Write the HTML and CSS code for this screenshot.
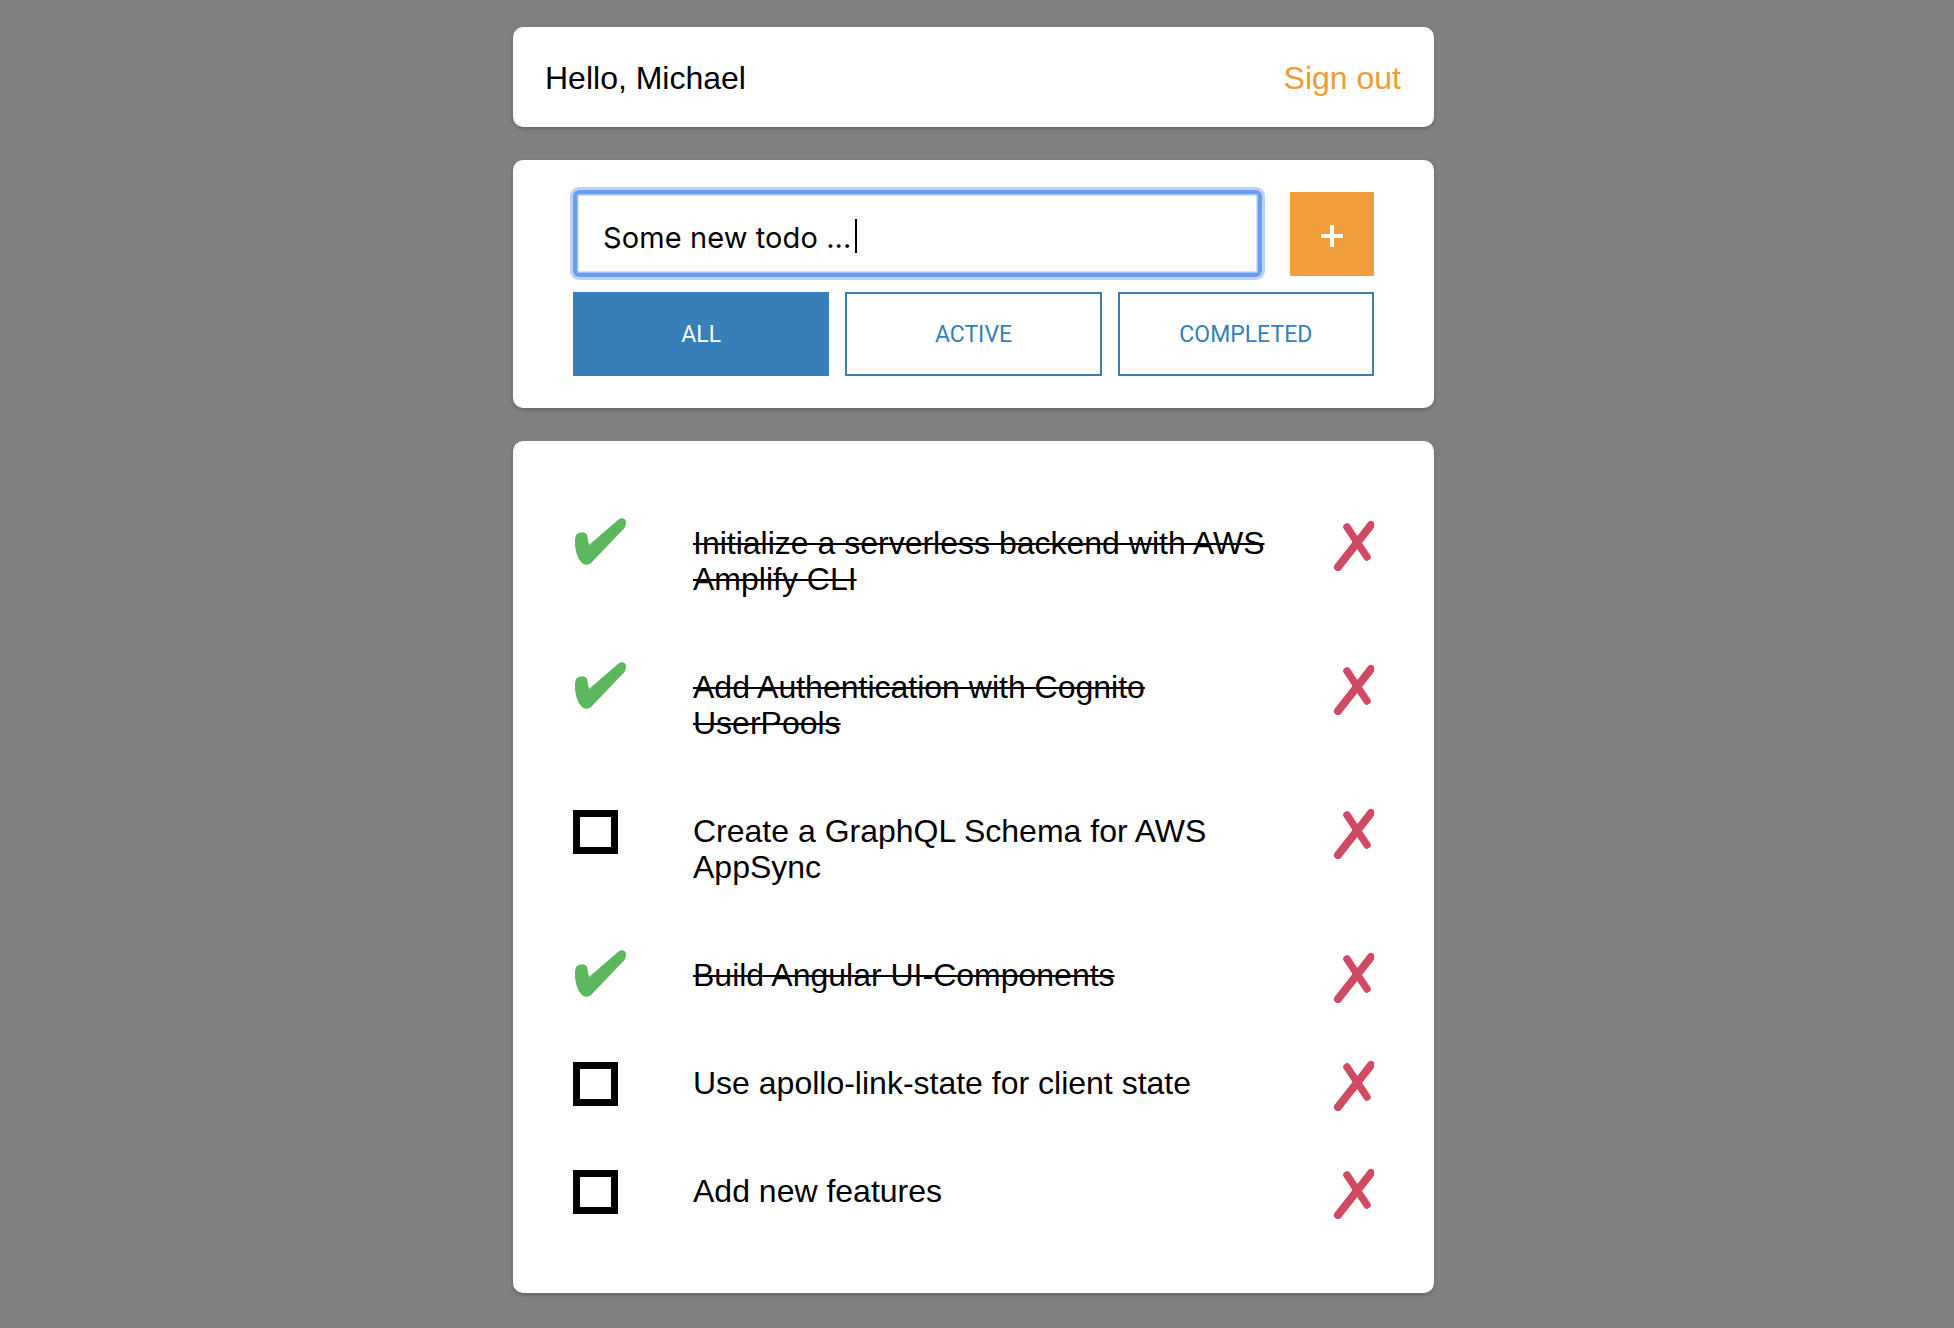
FILE: index.html
```html
<!DOCTYPE html>
<html lang="en">
<head>
<meta charset="utf-8">
<title>Todos</title>
<link rel="stylesheet" href="styles.css">
</head>
<body>
<main class="app">
  <header class="card header">
    <span class="greeting">Hello, Michael</span>
    <a class="signout" href="#">Sign out</a>
  </header>

  <section class="card composer">
    <div class="input-row">
      <div class="todo-input"><span class="todo-value">Some new todo ...</span><span class="caret"></span></div>
      <button class="add-btn" type="button" aria-label="Add">
        <svg class="plus" width="22" height="22" viewBox="0 0 22 22"><rect x="9" y="0" width="4" height="22" fill="#fff"/><rect x="0" y="9" width="22" height="4" fill="#fff"/></svg>
      </button>
    </div>
    <div class="filters">
      <button class="filter active" type="button">ALL</button>
      <button class="filter" type="button">ACTIVE</button>
      <button class="filter" type="button">COMPLETED</button>
    </div>
  </section>

  <section class="card list">
    <div class="item done">
      <svg class="check" width="54" height="52" viewBox="13 15 54 52"><path d="M17 33 C20 31 25 30 27 34 L29 44 L58 19 C61 16 66 17 66 21 C66 23 65.5 25 64.5 27 L32 61 C29 64.5 24 64.5 21 61 C17 56 15 49 15 41 C15 37 15.5 34 17 33 Z" fill="#5cb85c"/></svg>
      <span class="text">Initialize a serverless backend with AWS Amplify CLI</span>
      <svg class="remove" width="44" height="51" viewBox="0 0 44 51"><path d="M41 5 L8 47" stroke="#d04a63" stroke-width="8" stroke-linecap="round"/><path d="M17 7 L37 37" stroke="#d04a63" stroke-width="7.5" stroke-linecap="round"/></svg>
    </div>
    <div class="item done">
      <svg class="check" width="54" height="52" viewBox="13 15 54 52"><path d="M17 33 C20 31 25 30 27 34 L29 44 L58 19 C61 16 66 17 66 21 C66 23 65.5 25 64.5 27 L32 61 C29 64.5 24 64.5 21 61 C17 56 15 49 15 41 C15 37 15.5 34 17 33 Z" fill="#5cb85c"/></svg>
      <span class="text">Add Authentication with Cognito UserPools</span>
      <svg class="remove" width="44" height="51" viewBox="0 0 44 51"><path d="M41 5 L8 47" stroke="#d04a63" stroke-width="8" stroke-linecap="round"/><path d="M17 7 L37 37" stroke="#d04a63" stroke-width="7.5" stroke-linecap="round"/></svg>
    </div>
    <div class="item">
      <span class="box"></span>
      <span class="text">Create a GraphQL Schema for AWS AppSync</span>
      <svg class="remove" width="44" height="51" viewBox="0 0 44 51"><path d="M41 5 L8 47" stroke="#d04a63" stroke-width="8" stroke-linecap="round"/><path d="M17 7 L37 37" stroke="#d04a63" stroke-width="7.5" stroke-linecap="round"/></svg>
    </div>
    <div class="item done">
      <svg class="check" width="54" height="52" viewBox="13 15 54 52"><path d="M17 33 C20 31 25 30 27 34 L29 44 L58 19 C61 16 66 17 66 21 C66 23 65.5 25 64.5 27 L32 61 C29 64.5 24 64.5 21 61 C17 56 15 49 15 41 C15 37 15.5 34 17 33 Z" fill="#5cb85c"/></svg>
      <span class="text">Build Angular UI-Components</span>
      <svg class="remove" width="44" height="51" viewBox="0 0 44 51"><path d="M41 5 L8 47" stroke="#d04a63" stroke-width="8" stroke-linecap="round"/><path d="M17 7 L37 37" stroke="#d04a63" stroke-width="7.5" stroke-linecap="round"/></svg>
    </div>
    <div class="item">
      <span class="box"></span>
      <span class="text">Use apollo-link-state for client state</span>
      <svg class="remove" width="44" height="51" viewBox="0 0 44 51"><path d="M41 5 L8 47" stroke="#d04a63" stroke-width="8" stroke-linecap="round"/><path d="M17 7 L37 37" stroke="#d04a63" stroke-width="7.5" stroke-linecap="round"/></svg>
    </div>
    <div class="item">
      <span class="box"></span>
      <span class="text">Add new features</span>
      <svg class="remove" width="44" height="51" viewBox="0 0 44 51"><path d="M41 5 L8 47" stroke="#d04a63" stroke-width="8" stroke-linecap="round"/><path d="M17 7 L37 37" stroke="#d04a63" stroke-width="7.5" stroke-linecap="round"/></svg>
    </div>
  </section>
</main>
</body>
</html>
```

FILE: styles.css
```css
html, body {
  margin: 0;
  padding: 0;
}
body {
  background: #808080;
  font-family: "Liberation Sans", Arial, sans-serif;
  color: #000;
}
.app {
  width: 921px;
  margin: 27px 0 0 513px;
  display: flex;
  flex-direction: column;
  gap: 33px;
  padding-bottom: 36px;
}
.card {
  background: #fff;
  border-radius: 10px;
  box-shadow: 0 2px 4px rgba(0, 0, 0, 0.22);
  box-sizing: border-box;
}
.header {
  height: 100px;
  padding: 2px 33px 0 32px;
  display: flex;
  align-items: center;
  justify-content: space-between;
  font-size: 32px;
}
.signout {
  color: #f29a33;
  text-decoration: none;
}
.composer {
  padding: 30px 60px 32px;
  display: flex;
  flex-direction: column;
  gap: 15px;
}
.input-row {
  display: flex;
  align-items: center;
  gap: 28px;
}
.todo-input {
  flex: 1;
  height: 87px;
  box-sizing: border-box;
  border: 4px solid #6c9cec;
  border-radius: 6px;
  box-shadow: inset 0 0 0 1.5px #a9c3f3, 0 0 0 3px #bcd1f7;
  padding: 7px 26px 0;
  display: flex;
  align-items: center;
  font-family: Inter, "Noto Sans", sans-serif;
  font-size: 29px;
  letter-spacing: 0.1px;
  color: #000;
}
.caret {
  display: inline-block;
  width: 2px;
  height: 34px;
  background: #000;
  margin-left: 3px;
  margin-top: -3px;
}
.add-btn {
  width: 84px;
  height: 84px;
  border: 0;
  padding: 5px 0 0;
  background: #f09d3b;
  display: flex;
  align-items: center;
  justify-content: center;
}
.filters {
  display: grid;
  grid-template-columns: repeat(3, 1fr);
  gap: 16px;
}
.filter {
  height: 84px;
  box-sizing: border-box;
  border: 2px solid #367fb7;
  background: #fff;
  color: #367fb7;
  font-family: Roboto, "Liberation Sans", sans-serif;
  font-size: 23px;
  padding: 0;
}
.filter.active {
  background: #367fb7;
  color: #fff;
}
.list {
  padding: 48px 60px;
}
.item {
  display: grid;
  grid-template-columns: 120px 600px 1fr;
  align-items: start;
  padding: 36px 0;
  font-size: 32px;
  line-height: 36px;
}
.item .text {
  display: block;
}
.item.done .text {
  text-decoration: line-through;
  text-decoration-thickness: 2px;
}
.check {
  display: block;
  margin-top: -9px;
  margin-bottom: -20px;
}
.box {
  display: block;
  width: 45px;
  height: 44px;
  box-sizing: border-box;
  border: 7px solid #000;
  margin-top: -3px;
  margin-bottom: -20px;
}
.remove {
  display: block;
  justify-self: end;
  margin-top: -5px;
  margin-bottom: -20px;
}
```
